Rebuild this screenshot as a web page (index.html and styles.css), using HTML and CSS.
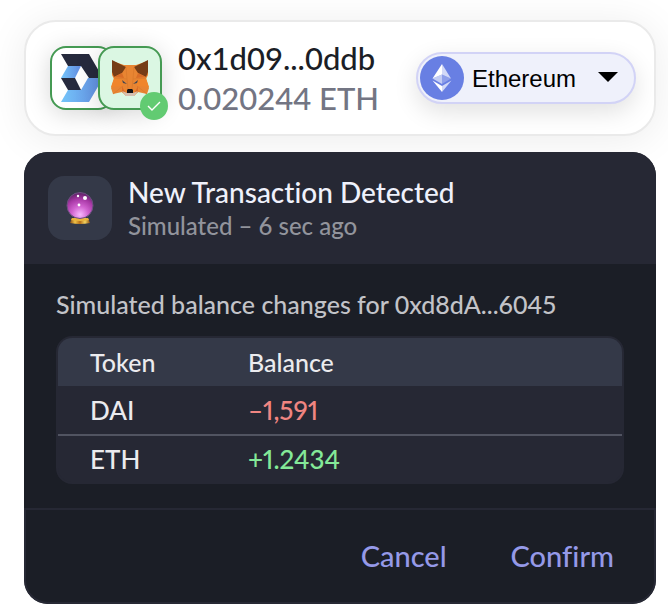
FILE: index.html
```html
<!DOCTYPE html>
<html lang="en">
<head>
<meta charset="utf-8">
<meta name="viewport" content="width=device-width, initial-scale=1">
<title>New Transaction Detected</title>
<link rel="stylesheet" href="styles.css">
</head>
<body>
<main class="page">
  <header class="account">
    <div class="avatars">
      <div class="avatar">
        <svg class="avatar-logo" viewBox="0 0 42 48" aria-hidden="true">
          <defs>
            <linearGradient id="blue" x1="0" x2="1"><stop offset="0" stop-color="#75c5fa"/><stop offset="1" stop-color="#618be0"/></linearGradient>
          </defs>
          <path fill="#262a3d" d="M0 0H28L42 24H28L20 12H7Z"/>
          <path fill="url(#blue)" d="M7 12H20L14 24H0Z"/>
          <path fill="#262a3d" d="M0 24H14L20 36H7Z"/>
          <path fill="url(#blue)" d="M7 36H20L27 24H42L28 48H0Z"/>
        </svg>
      </div>
      <div class="avatar avatar-active">
        <svg class="avatar-fox" viewBox="0 0 38 36" aria-hidden="true">
          <path fill="#e88532" d="M1 1L13 5H25L37 1V15L35 19L38 28L36 34L27 32L23 36H15L11 32L2 34L0 28L3 19L1 15Z"/>
          <path fill="#763d16" d="M1 0L15 7L11 13L3 17L1 12ZM37 0L23 7L27 13L35 17L37 12Z"/>
          <path fill="#f0862b" d="M3 18L12 20V26L0 27ZM35 18L26 20V26L38 27Z"/>
          <path fill="#d96d27" d="M11 26L15 34L11 32ZM27 26L23 34L27 32ZM3 17L11 13L13 18ZM35 17L27 13L25 18Z"/>
          <path fill="#d4bfb1" d="M11 31L16 33H22L27 31L23 36H15Z"/>
          <path fill="#454851" d="M11 20L16 24L12 23ZM27 20L22 24L26 23Z"/>
          <path fill="#111316" d="M16 30L17 29H21L22 30V33H16Z"/>
          <path fill="none" stroke="#d9782b" stroke-width=".7" d="M15 7L16 19L17 29M23 7L22 19L21 29M3 18L16 19M35 18L22 19M2 34L12 26M36 34L26 26"/>
        </svg>
        <span class="badge">
          <svg viewBox="0 0 14 12" aria-hidden="true"><path d="M1 6L5 10L13 2" fill="none" stroke="#fff" stroke-width="1.4"/></svg>
        </span>
      </div>
    </div>
    <div class="account-text">
      <div class="address">0x1d09...0ddb</div>
      <div class="funds">0.020244 ETH</div>
    </div>
    <div class="network">
      <select class="network-select" aria-label="Network"><option>Ethereum</option></select>
      <svg class="network-icon" viewBox="0 0 44 44" aria-hidden="true">
        <circle cx="22" cy="22" r="22" fill="#687fe3"/>
        <path fill="#fff" fill-opacity=".7" d="M22 8V18.500L31 22.600Z"/>
        <path fill="#fff" d="M22 8L12.500 22.600L22 18.500Z"/>
        <path fill="#fff" fill-opacity=".6" d="M12.500 22.600L22 18.500V28Z"/>
        <path fill="#fff" fill-opacity=".25" d="M22 18.500L31 22.600L22 28Z"/>
        <path fill="#fff" d="M12.500 24.500L22 30V36Z"/>
        <path fill="#fff" fill-opacity=".7" d="M31.500 24.500L22 30V36Z"/>
      </svg>
      <svg class="network-caret" viewBox="0 0 20 10" aria-hidden="true"><path d="M0 0H20L10 10Z"/></svg>
    </div>
  </header>

  <section class="dialog">
    <header class="dialog-head">
      <div class="dialog-icon">
        <svg viewBox="0 0 28 34" aria-hidden="true">
          <defs>
            <radialGradient id="orb" cx=".5" cy=".85" r=".8"><stop offset="0" stop-color="#f8b9ff"/><stop offset=".4" stop-color="#d163d0"/><stop offset=".75" stop-color="#a738a5"/><stop offset="1" stop-color="#692570"/></radialGradient>
            <linearGradient id="gold" x1="0" x2="1"><stop offset="0" stop-color="#8c4d12"/><stop offset=".25" stop-color="#f1c447"/><stop offset=".5" stop-color="#b76c16"/><stop offset=".75" stop-color="#f4d460"/><stop offset="1" stop-color="#8c4d12"/></linearGradient>
          </defs>
          <path fill="url(#gold)" d="M6 27H22L24 32Q14 34 4 32Z"/>
          <circle cx="14" cy="14.500" r="13" fill="url(#orb)" stroke="#6c5081"/>
          <path fill="#e9b43c" d="M6 27Q14 29 22 27L23 29Q14 31 5 29Z"/>
          <g fill="#fff"><circle cx="12" cy="5" r="1.200"/><circle cx="19" cy="7" r="2"/><circle cx="13" cy="14" r="1.400"/></g>
        </svg>
      </div>
      <div class="dialog-titles">
        <h1 class="title">New Transaction Detected</h1>
        <p class="subtitle">Simulated – 6 sec ago</p>
      </div>
    </header>
    <div class="dialog-body">
      <p class="intro" id="intro">Simulated balance changes for 0xd8dA...6045</p>
      <div class="table-frame">
        <table class="changes" aria-labelledby="intro">
          <thead><tr><th scope="col">Token</th><th scope="col">Balance</th></tr></thead>
          <tbody>
            <tr><td>DAI</td><td class="loss">–1,591</td></tr>
            <tr><td>ETH</td><td class="gain">+1.2434</td></tr>
          </tbody>
        </table>
      </div>
    </div>
    <footer class="actions">
      <button class="action" type="button">Cancel</button>
      <button class="action" type="button">Confirm</button>
    </footer>
  </section>
</main>
</body>
</html>
```
FILE: styles.css
```css
* {
  box-sizing: border-box;
}

body {
  margin: 0;
  background: #fff;
  font-family: Lato, "Liberation Sans", sans-serif;
  font-weight: 500;
  font-variant-ligatures: none;
}

h1,
p {
  margin: 0;
  font-weight: 500;
}

svg {
  display: block;
}

.page {
  display: flex;
  flex-direction: column;
  gap: 16px;
  padding: 20px 12px 10px 24px;
}

.account {
  display: flex;
  align-items: center;
  padding: 16px 18px 16px 24px;
  border: 2px solid #eaeaea;
  border-radius: 32px;
  background: #fff;
  box-shadow: 0 4px 40px rgba(0, 0, 0, 0.08);
}

.avatars {
  display: flex;
}

.avatar {
  position: relative;
  display: grid;
  place-items: center;
  width: 64px;
  height: 64px;
  border: 2px solid #459a53;
  border-radius: 16px;
  background: #fff;
  box-shadow: 0 4px 24px rgba(0, 0, 0, 0.16);
}

.avatar-active {
  margin-left: -16px;
  background: #dbf7e3;
}

.avatar-logo {
  width: 42px;
  height: 48px;
}

.avatar-fox {
  width: 38px;
  height: 36px;
}

.badge {
  position: absolute;
  right: -8px;
  bottom: -12px;
  display: grid;
  place-items: center;
  width: 28px;
  height: 28px;
  border-radius: 50%;
  background: #62cb72;
}

.badge svg {
  width: 14px;
  height: 12px;
}

.account-text {
  flex: 1;
  padding-left: 16px;
  font-size: 31px;
  line-height: 40px;
  white-space: nowrap;
}

.address {
  color: #1b1e26;
}

.funds {
  color: #737583;
}

.network {
  position: relative;
}

.network-select {
  appearance: none;
  display: block;
  width: 220px;
  height: 52px;
  padding: 0 54px;
  border: 2px solid #d2d3f6;
  border-radius: 26px;
  background: #eff1fb;
  box-shadow: 0 8px 24px rgba(0, 0, 0, 0.12);
  color: #000;
  font: 24px "Liberation Sans", Arial, sans-serif;
}

.network-icon {
  position: absolute;
  top: 4px;
  left: 4px;
  width: 44px;
  height: 44px;
  pointer-events: none;
}

.network-caret {
  position: absolute;
  top: 20px;
  right: 18px;
  width: 20px;
  height: 10px;
  pointer-events: none;
}

.dialog {
  position: relative;
  overflow: hidden;
  border-radius: 24px;
  background: #1b1e26;
}

.dialog-head {
  display: flex;
  align-items: center;
  gap: 16px;
  padding: 22px 24px;
  background: #262834;
}

.dialog-icon {
  display: grid;
  place-items: center;
  width: 64px;
  height: 64px;
  border-radius: 16px;
  background: #343948;
}

.dialog-icon svg {
  width: 28px;
  height: 34px;
}

.title {
  color: #eff1fb;
  font-size: 28px;
  line-height: 36px;
}

.subtitle {
  color: #92949c;
  font-size: 24px;
  line-height: 32px;
}

.dialog-body {
  padding: 24px 32px;
}

.intro {
  margin-bottom: 16px;
  color: #c2c3c8;
  font-size: 25px;
  line-height: 32px;
}

.table-frame {
  overflow: hidden;
  border: 2px solid #262834;
  border-radius: 16px;
  background: #262834;
}

.changes {
  width: 100%;
  border-spacing: 0;
  table-layout: fixed;
}

.changes th,
.changes td {
  height: 48px;
  padding: 0 0 0 32px;
  color: #ebebee;
  font-size: 26px;
  font-weight: 500;
  font-variant-numeric: proportional-nums;
  line-height: 32px;
  text-align: left;
}

.changes th {
  background: #343948;
  font-size: 25px;
}

.changes th:first-child {
  width: 28%;
}

.changes tr + tr td {
  border-top: 2px solid #515461;
}

.changes .loss {
  color: #f08581;
}

.changes .gain {
  color: #84e998;
}

.actions {
  display: flex;
  justify-content: flex-end;
  gap: 64px;
  padding: 26px 40px;
  border: 2px solid #262834;
  border-radius: 0 0 24px 24px;
}

.action {
  padding: 0;
  border: 0;
  background: none;
  color: #9599e8;
  font: 500 29px/40px Lato, "Liberation Sans", sans-serif;
  font-variant-ligatures: none;
}
```
